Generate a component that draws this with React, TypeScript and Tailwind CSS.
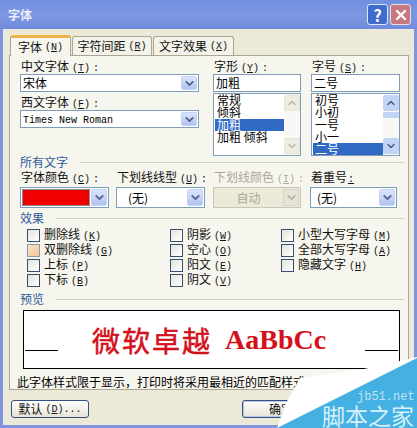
import { ReactNode } from 'react';
import { ChevronDown, ChevronUp, X } from 'lucide-react';

const font = "[font-family:'Noto_Sans_CJK_SC','Liberation_Sans',sans-serif]";

const Key = ({ k }: { k: string }) => (
  <span className="ml-[3px] font-['Liberation_Mono',monospace] text-[10px]">
    (<span className="underline">{k}</span>)
  </span>
);

const Label = ({ text, k, colon = true, disabled = false }: { text: string; k?: string; colon?: boolean; disabled?: boolean }) => (
  <div className={`h-[14px] whitespace-nowrap pl-px text-[12px] leading-[14px] ${disabled ? 'text-[#aca899]' : 'text-[#111]'}`}>
    {text}
    {k && <Key k={k} />}
    {colon && <span className="ml-[3px] font-['Liberation_Mono',monospace] text-[10px]">:</span>}
  </div>
);

const Arrow = ({ disabled = false }: { disabled?: boolean }) => (
  <span
    className={`flex h-full w-[16px] shrink-0 items-center justify-center rounded-[2px] border ${
      disabled ? 'border-[#d8d6c8] bg-[#e6e4d6] text-[#b5b2a0]' : 'border-[#c3d3f8] bg-gradient-to-b from-[#dbe5fb] to-[#b1c4ef] text-[#4d6185]'
    }`}
  >
    <ChevronDown size={13} strokeWidth={3.2} />
  </span>
);

const Combo = ({ children, height = 'h-[18px]', disabled = false }: { children?: ReactNode; height?: string; disabled?: boolean }) => (
  <div className={`flex ${height} items-center border p-px ${disabled ? 'border-[#c9c7ba] bg-[#ece9d8]' : 'border-[#7f9db9] bg-white'}`}>
    <div className="min-w-0 flex-1 whitespace-nowrap pl-[1px] text-[12px] leading-[14px] text-black">{children}</div>
    <Arrow disabled={disabled} />
  </div>
);

const Heading = ({ text }: { text: string }) => (
  <div className="flex h-[14px] items-center gap-[12px]">
    <span className="text-[12px] leading-[14px] text-[#2e5a9b]">{text}</span>
    <span className="h-px flex-1 bg-[#d0d0bf]" />
  </div>
);

const Check = ({ text, k, hot = false }: { text: string; k: string; hot?: boolean }) => (
  <div className="flex h-[15px] items-center">
    <span
      className={`h-[13px] w-[13px] shrink-0 border ${
        hot ? 'border-[#8c9bab] bg-gradient-to-br from-[#fbe3c4] to-[#f4c596]' : 'border-[#33506e] bg-gradient-to-br from-[#e4e3da] to-white'
      }`}
    />
    <span className="ml-[4px] whitespace-nowrap text-[12px] leading-[14px] text-[#111]">
      {text}
      <Key k={k} />
    </span>
  </div>
);

const ListBox = ({ items, selected, active = false }: { items: string[]; selected: number; active?: boolean }) => {
  const btn = active ? 'border-[#c3d3f8] bg-[#c4d4f7] text-[#4d6185]' : 'border-[#e5e4da] bg-[#eeede2] text-[#bcbcae]';
  return (
    <div className="mt-[1px] flex h-[63px] border border-[#7f9db9] bg-white pl-px pt-0">
      <div className="flex-1 pb-px">
        {items.map((item, i) => (
          <div
            key={item}
            className={`mb-[0.3px] h-[12px] whitespace-nowrap pl-[2px] text-[12px] leading-[12px] ${i === selected ? 'bg-[#316ac5] text-white' : 'text-black'}`}
          >
            {item}
          </div>
        ))}
      </div>
      <div className="flex w-[16px] shrink-0 flex-col bg-[#f8f8f4] py-px">
        <span className={`flex h-[16px] items-center justify-center rounded-[2px] border ${btn}`}>
          <ChevronUp size={12} strokeWidth={3.2} />
        </span>
        {active && <span className="mt-px h-[6px] rounded-[1px] bg-[#c4d4f7]" />}
        <span className={`mt-auto flex h-[16px] items-center justify-center rounded-[2px] border ${btn}`}>
          <ChevronDown size={12} strokeWidth={3.2} />
        </span>
      </div>
    </div>
  );
};

const App = () => (
  <div className={`relative flex h-[428px] w-[417px] flex-col overflow-hidden bg-[#7f96df] ${font}`}>
    <div className="flex h-[29px] shrink-0 items-center justify-between bg-gradient-to-b from-[#6f8fe0] via-[#7d97e2] to-[#6f8bdb] pl-[8px] pr-[6px]">
      <span className="text-[12px] font-bold text-[#e8eefc]">字体</span>
      <div className="flex gap-[2px]">
        <span className="flex h-[21px] w-[21px] items-center justify-center rounded-[3px] border border-[#dfe7fb] bg-[#3f6ccb] text-[16px] font-bold leading-none text-white">?</span>
        <span className="flex h-[21px] w-[21px] items-center justify-center rounded-[3px] border border-[#e8dbe4] bg-[#c67a80] text-white">
          <X size={16} strokeWidth={3.5} />
        </span>
      </div>
    </div>

    <div className="mx-[3px] mb-[3px] flex flex-1 flex-col bg-[#ece9d8] pl-[6px] pr-[5px]">
      <div className="flex h-[26px] items-end pl-px">
        <div className="z-10 -mb-px flex h-[21px] w-[61px] items-center justify-center rounded-t-[3px] border-x border-[#a9a793] border-t-[3px] border-t-[#eeb14a] bg-[#f6f5ee] text-[12px] text-[#111]">
          字体<Key k="N" />
        </div>
        <div className="ml-px flex h-[19px] w-[80px] items-center justify-center rounded-t-[3px] border-x border-t border-[#a9a793] bg-[#f4f3ea] text-[12px] text-[#111]">
          字符间距<Key k="R" />
        </div>
        <div className="ml-px flex h-[19px] w-[81px] items-center justify-center rounded-t-[3px] border-x border-t border-[#a9a793] bg-[#f4f3ea] text-[12px] text-[#111]">
          文字效果<Key k="X" />
        </div>
      </div>

      <div className="h-[335px] border border-[#a9a793] bg-[#f6f5ee] pl-[10px] pr-[4px] pt-[3px]">
        <div className="flex h-[96px] gap-[14px]">
          <div className="w-[179px]">
            <Label text="中文字体" k="T" />
            <div className="mt-px">
              <Combo>宋体</Combo>
            </div>
            <div className="mt-[3px]" />
            <Label text="西文字体" k="F" />
            <div className="mt-px">
              <Combo>
                <span className="font-['Liberation_Mono',monospace] text-[10px]">Times New Roman</span>
              </Combo>
            </div>
          </div>
          <div className="flex gap-[10px]">
            <div className="w-[88px]">
              <Label text="字形" k="Y" />
              <div className="mt-px flex h-[18px] items-center border border-[#7f9db9] bg-white pl-[2px] text-[12px] text-black">加粗</div>
              <ListBox items={['常规', '倾斜', '加粗', '加粗 倾斜']} selected={2} />
            </div>
            <div className="w-[89px]">
              <Label text="字号" k="S" />
              <div className="mt-px flex h-[18px] items-center border border-[#7f9db9] bg-white pl-[2px] text-[12px] text-black">二号</div>
              <ListBox items={['初号', '小初', '一号', '小一', '二号']} selected={4} active />
            </div>
          </div>
        </div>

        <Heading text="所有文字" />
        <div className="mt-[1px] grid grid-cols-[89px_89px_89px_89px] gap-x-[7px] [&>*:nth-child(3)]:ml-px [&>*:nth-child(4)]:ml-[2px]">
          <div>
            <Label text="字体颜色" k="C" />
            <div className="mt-[3px]">
              <Combo height="h-[21px]">
                <div className="mr-[2px] h-[15px] bg-[#f00000] outline outline-1 outline-[#8a8a8a]" />
              </Combo>
            </div>
          </div>
          <div>
            <Label text="下划线线型" k="U" />
            <div className="mt-[3px]">
              <Combo height="h-[21px]"><span className="pl-[9px]">(无)</span></Combo>
            </div>
          </div>
          <div>
            <Label text="下划线颜色" k="I" disabled />
            <div className="mt-[3px]">
              <Combo height="h-[21px]" disabled><span className="block pr-[2px] text-center text-[#aca899]">自动</span></Combo>
            </div>
          </div>
          <div>
            <div className="h-[14px] whitespace-nowrap pl-px text-[12px] leading-[14px] text-[#111]">
              着重号<span className="ml-px font-['Liberation_Mono',monospace] text-[10px] underline">:</span>
            </div>
            <div className="mt-[3px]">
              <Combo height="h-[21px]"><span className="pl-[4px]">(无)</span></Combo>
            </div>
          </div>
        </div>

        <div className="mt-[3px]">
          <Heading text="效果" />
        </div>
        <div className="ml-[7px] mt-[3px] grid grid-cols-[143px_111px_1fr]">
          <div>
            <Check text="删除线" k="K" />
            <Check text="双删除线" k="G" hot />
            <Check text="上标" k="P" />
            <Check text="下标" k="B" />
          </div>
          <div>
            <Check text="阴影" k="W" />
            <Check text="空心" k="O" />
            <Check text="阳文" k="E" />
            <Check text="阴文" k="V" />
          </div>
          <div>
            <Check text="小型大写字母" k="M" />
            <Check text="全部大写字母" k="A" />
            <Check text="隐藏文字" k="H" />
          </div>
        </div>

        <div className="mt-[4px]">
          <Heading text="预览" />
        </div>
        <div className="ml-[3px] mr-[4px] mt-[4px] flex h-[59px] items-center border border-black bg-white px-px">
          <span className="mt-[22px] h-px w-[33px] bg-black" />
          <span className="ml-[34px] text-[28px] font-normal leading-none tracking-[2px] text-[#d4101c] [-webkit-text-stroke:0.5px_#d4101c]">微软卓越</span>
          <span className="ml-[13px] font-['Liberation_Serif',serif] text-[28px] font-bold leading-none text-[#d4101c]">AaBbCc</span>
          <span className="ml-auto mt-[22px] h-px w-[33px] bg-black" />
        </div>
        <div className="-ml-[3px] mt-[6px] whitespace-nowrap text-[12px] leading-[14px] text-black">此字体样式限于显示，打印时将采用最相近的匹配样式。</div>
      </div>

      <div className="mt-[10px] flex pl-[2px]">
        <button className="flex h-[18px] w-[78px] items-center justify-center rounded-[3px] border border-[#34507f] bg-gradient-to-b from-white to-[#e6e3d6] text-[12px] text-[#111]">
          默认<Key k="D" /><span className="font-['Liberation_Mono',monospace] text-[10px]">...</span>
        </button>
        <button className="ml-[153px] flex h-[18px] w-[78px] items-center justify-center rounded-[3px] border border-[#34507f] bg-gradient-to-b from-white to-[#e6e3d6] text-[12px] text-[#111] shadow-[inset_0_0_0_1px_#b6c8ee]">
          确定
        </button>
      </div>
    </div>

    {/* watermark sits over the corner of the dialog */}
    <svg className="absolute left-0 top-0" width="417" height="428" viewBox="0 0 417 428">
      <polygon points="277,428 285,405 300,378 364,369 417,357 417,428" fill="#ffffff" />
      <polygon points="277,428 417,358 417,428" fill="#45b1e2" />
    </svg>
    <span className="absolute left-[357px] top-[391px] font-['Liberation_Mono',monospace] text-[12px] leading-none text-[#bfe4f6]">jb51.net</span>
    <span className="absolute left-[322px] top-[402px] text-[23px] leading-[26px] text-[#d8f0fb]">脚本之家</span>
  </div>
);

export default App;
